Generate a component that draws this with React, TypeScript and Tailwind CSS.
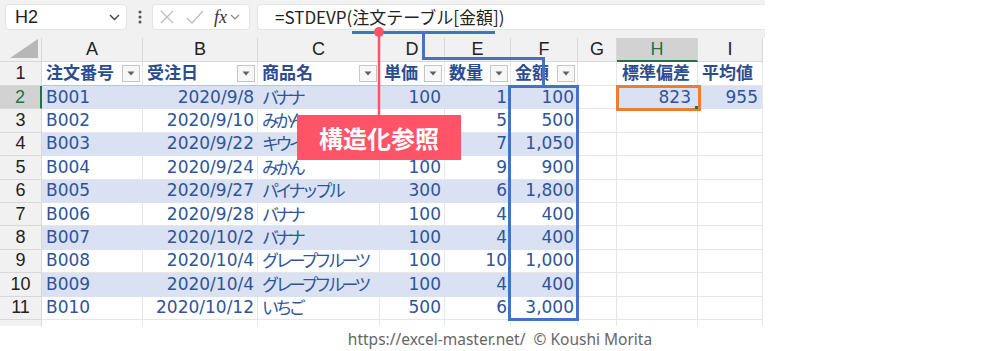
import React from "react";

const W = ["w-[42px]", "w-[101px]", "w-[115px]", "w-[122px]", "w-[65px]", "w-[66px]", "w-[67px]", "w-[39px]", "w-[81px]", "w-[65px]"];
const LETTERS = ["A", "B", "C", "D", "E", "F", "G", "H", "I"];

const rows: [string, string, string, string, number, string][] = [
  ["B001", "2020/9/8", "バナナ", "100", 1, "100"],
  ["B002", "2020/9/10", "みかん", "", 5, "500"],
  ["B003", "2020/9/22", "キウイ", "", 7, "1,050"],
  ["B004", "2020/9/24", "みかん", "100", 9, "900"],
  ["B005", "2020/9/27", "パイナップル", "300", 6, "1,800"],
  ["B006", "2020/9/28", "バナナ", "100", 4, "400"],
  ["B007", "2020/10/2", "バナナ", "100", 4, "400"],
  ["B008", "2020/10/4", "グレープフルーツ", "100", 10, "1,000"],
  ["B009", "2020/10/4", "グレープフルーツ", "100", 4, "400"],
  ["B010", "2020/10/12", "いちご", "500", 6, "3,000"],
];

const FONT = { fontFamily: '"DejaVu Sans", "Noto Sans CJK JP", sans-serif' };
const JP = { fontFamily: '"Noto Sans CJK JP", sans-serif' };

function Filter() {
  return (
    <div className="ml-auto mr-[2px] flex h-[17px] w-[18px] shrink-0 items-center justify-center border border-[#c6c6c6] bg-[#f7f7f7]">
      <svg width="8" height="5" viewBox="0 0 8 5">
        <path d="M0.5 0.5 L7.5 0.5 L4 4.5 Z" fill="#606060" />
      </svg>
    </div>
  );
}

export default function App() {
  const headers = ["注文番号", "受注日", "商品名", "単価", "数量", "金額"];
  return (
    <div className="relative h-[351px] w-[1000px] overflow-hidden bg-white" style={FONT}>
      <div className="w-[765px]">
        {/* Formula bar */}
        <div className="flex h-[38px] items-start bg-[#f1f1f1] pt-[4px]">
          <div className="ml-[5px] flex h-[26px] w-[122px] items-center rounded-[4px] border border-[#e4e4e4] bg-white pl-[9px] pr-[6px]">
            <span className="text-[18px] text-[#222]" style={{ fontFamily: '"Liberation Sans", sans-serif' }}>H2</span>
            <svg className="ml-auto" width="11" height="7" viewBox="0 0 11 7">
              <path d="M1 1 L5.5 5.5 L10 1" fill="none" stroke="#444" strokeWidth="1.4" />
            </svg>
          </div>
          <div className="flex h-[26px] w-[25px] items-center justify-center">
            <svg width="4" height="14" viewBox="0 0 4 14">
              <circle cx="2" cy="2" r="1.5" fill="#555" />
              <circle cx="2" cy="7" r="1.5" fill="#555" />
              <circle cx="2" cy="12" r="1.5" fill="#555" />
            </svg>
          </div>
          <div className="flex h-[26px] w-[98px] items-center rounded-[4px] border border-[#e4e4e4] bg-white pl-[6px]">
            <svg width="16" height="16" viewBox="0 0 16 16">
              <path d="M2 2 L14 14 M14 2 L2 14" stroke="#bdbdbd" strokeWidth="1.3" />
            </svg>
            <svg className="ml-[11px]" width="18" height="16" viewBox="0 0 18 16">
              <path d="M1 9 L6 14 L17 2" fill="none" stroke="#bdbdbd" strokeWidth="1.3" />
            </svg>
            <span className="ml-[10px] text-[18px] italic leading-none text-[#333]" style={{ fontFamily: '"Liberation Serif", serif' }}>fx</span>
            <svg className="ml-[3px]" width="10" height="7" viewBox="0 0 10 7">
              <path d="M1 1 L5 5 L9 1" fill="none" stroke="#888" strokeWidth="1.2" />
            </svg>
          </div>
          <div className="ml-[7px] flex h-[26px] flex-1 items-center rounded-l-[4px] border border-r-0 border-[#e4e4e4] bg-white pl-[17px]">
            <span className="text-[17px] text-[#222]" style={JP}>
              =STDEVP(注文テーブル[金額])
            </span>
          </div>
        </div>

        {/* Column headers */}
        <div className="flex h-[24px]">
          <div className={`${W[0]} relative h-full border-r border-b border-[#d8d8d8] bg-[#f1f1f1]`}>
            <svg className="absolute right-[3px] bottom-[3px]" width="28" height="19" viewBox="0 0 28 19">
              <path d="M0 19 L28 19 L28 0 Z" fill="#b7b7b7" />
            </svg>
          </div>
          {LETTERS.map((l, i) => {
            const sel = l === "H";
            return (
              <div
                key={l}
                className={`${W[i + 1]} flex h-full items-center justify-center border-r border-[#d8d8d8] text-[18px] ${
                  sel ? "border-b-2 border-b-[#217346] bg-[#d2d2d2] text-[#217346]" : "border-b border-b-[#d8d8d8] bg-[#f1f1f1] text-[#222]"
                }`}
                style={{ fontFamily: '"Liberation Sans", sans-serif' }}
              >
                {l}
              </div>
            );
          })}
        </div>

        {/* Row 1: table header */}
        <div className="flex h-[24px]">
          <div className={`${W[0]} flex h-full items-center justify-center border-r border-b border-[#d8d8d8] bg-[#f1f1f1] text-[18px] text-[#222]`} style={{ fontFamily: '"Liberation Sans", sans-serif' }}>
            1
          </div>
          {headers.map((h, i) => (
            <div key={h} className={`${W[i + 1]} flex h-full items-center border-r border-b border-r-[#e6e6e6] border-b-[#b4c6e7] bg-white pl-[4px] text-[17px] font-bold text-[#2b4d8f]`}>
              <span className="whitespace-nowrap leading-none">{h}</span>
              <Filter />
            </div>
          ))}
          <div className={`${W[7]} h-full border-r border-b border-[#e6e6e6]`} />
          <div className={`${W[8]} flex h-full items-center border-r border-b border-[#e6e6e6] pl-[5px] text-[17px] font-bold text-[#2b4d8f]`}>
            <span className="whitespace-nowrap leading-none">標準偏差</span>
          </div>
          <div className={`${W[9]} flex h-full items-center border-r border-b border-[#e6e6e6] pl-[4px] text-[17px] font-bold text-[#2b4d8f]`}>
            <span className="whitespace-nowrap leading-none">平均値</span>
          </div>
        </div>

        {/* Data rows */}
        {rows.map((r, ri) => {
          const band = ri % 2 === 0;
          const cellBase = band ? "bg-[#d9e1f2] border-r-[#d9e1f2] border-b-[#d9e1f2]" : "bg-white border-r-[#e6e6e6] border-b-[#e6e6e6]";
          const last = ri === rows.length - 1;
          const lastB = last ? "border-b-[#8ea9db]" : "";
          const sel = ri === 0;
          return (
            <div key={ri} className="flex h-[23.4px]">
              <div
                className={`${W[0]} flex h-full items-center justify-center border-b border-[#d8d8d8] text-[18px] ${
                  sel ? "border-r-2 border-r-[#217346] bg-[#d2d2d2] text-[#217346]" : "border-r border-r-[#d8d8d8] bg-[#f1f1f1] text-[#222]"
                }`}
                style={{ fontFamily: '"Liberation Sans", sans-serif' }}
              >
                {ri + 2}
              </div>
              <div className={`${W[1]} flex h-full items-center border-r border-b ${cellBase} ${lastB} pl-[4px] text-[17px] leading-none text-[#30549a]`}>{r[0]}</div>
              <div className={`${W[2]} flex h-full items-center justify-end border-r border-b ${cellBase} ${lastB} pr-[3px] text-[17px] leading-none text-[#30549a]`}>{r[1]}</div>
              <div className={`${W[3]} flex h-full items-center overflow-visible whitespace-nowrap border-r border-b ${cellBase} ${lastB} pl-[4px] pb-[2px] text-[17px] leading-none tracking-[-3.6px] text-[#30549a]`}>
                <span style={JP}>{r[2]}</span>
              </div>
              <div className={`${W[4]} flex h-full items-center justify-end border-r border-b ${cellBase} ${lastB} pr-[3px] text-[17px] leading-none text-[#30549a]`}>{r[3]}</div>
              <div className={`${W[5]} flex h-full items-center justify-end border-r border-b ${cellBase} ${lastB} pr-[3px] text-[17px] leading-none text-[#30549a]`}>{r[4]}</div>
              <div className={`${W[6]} flex h-full items-center justify-end border-r border-b ${cellBase} ${lastB} pr-[3px] text-[17px] leading-none text-[#30549a]`}>{r[5]}</div>
              <div className={`${W[7]} h-full border-r border-b border-[#e6e6e6]`} />
              {sel ? (
                <>
                  <div className={`${W[8]} flex h-full items-center justify-end border-r border-b border-[#d9e1f2] bg-[#d9e1f2] pr-[6px] text-[17px] leading-none text-[#30549a]`}>823</div>
                  <div className={`${W[9]} flex h-full items-center justify-end border-r border-b border-r-[#e6e6e6] border-b-[#d9e1f2] bg-[#d9e1f2] pr-[4px] text-[17px] leading-none text-[#30549a]`}>955</div>
                </>
              ) : (
                <>
                  <div className={`${W[8]} h-full border-r border-b border-[#e6e6e6]`} />
                  <div className={`${W[9]} h-full border-r border-b border-[#e6e6e6]`} />
                </>
              )}
            </div>
          );
        })}

        {/* Partial row */}
        <div className="flex h-[6px]">
          <div className={`${W[0]} h-full border-r border-[#d8d8d8] bg-[#f1f1f1]`} />
          {LETTERS.map((l, i) => (
            <div key={l} className={`${W[i + 1]} h-full border-r border-[#e6e6e6]`} />
          ))}
        </div>
      </div>

      {/* Footer */}
      <div className="flex h-[27px] items-center justify-center text-[15.5px] text-[#666]" style={{ fontFamily: '"Noto Sans", sans-serif' }}>
        https://excel-master.net/&nbsp;&nbsp;© Koushi Morita
      </div>

      {/* Annotations overlay */}
      <svg className="pointer-events-none absolute left-0 top-0" width="1000" height="351" viewBox="0 0 1000 351">
        <path d="M352 32.5 H495" stroke="#4472c4" strokeWidth="3" fill="none" />
        <path d="M423.5 32.5 V58.5 H543.5 V86" stroke="#4472c4" strokeWidth="3" fill="none" />
        <rect x="509.5" y="86.5" width="68" height="233" stroke="#4472c4" strokeWidth="3" fill="none" />
        <rect x="617.5" y="86.5" width="82" height="23" stroke="#ed7d31" strokeWidth="3" fill="none" />
        <rect x="695" y="106" width="3" height="3" fill="#217346" />
        <line x1="379" y1="32" x2="379" y2="116" stroke="#ff5468" strokeWidth="2.5" />
        <circle cx="379" cy="32" r="5" fill="#ff5468" />
      </svg>

      {/* Callout */}
      <div className="absolute left-[297px] top-[115px] flex h-[45px] w-[164px] items-center justify-center bg-[#ff5468] text-[24px] font-bold text-white" style={{ fontFamily: '"Noto Sans CJK JP", sans-serif' }}>
        構造化参照
      </div>
    </div>
  );
}
